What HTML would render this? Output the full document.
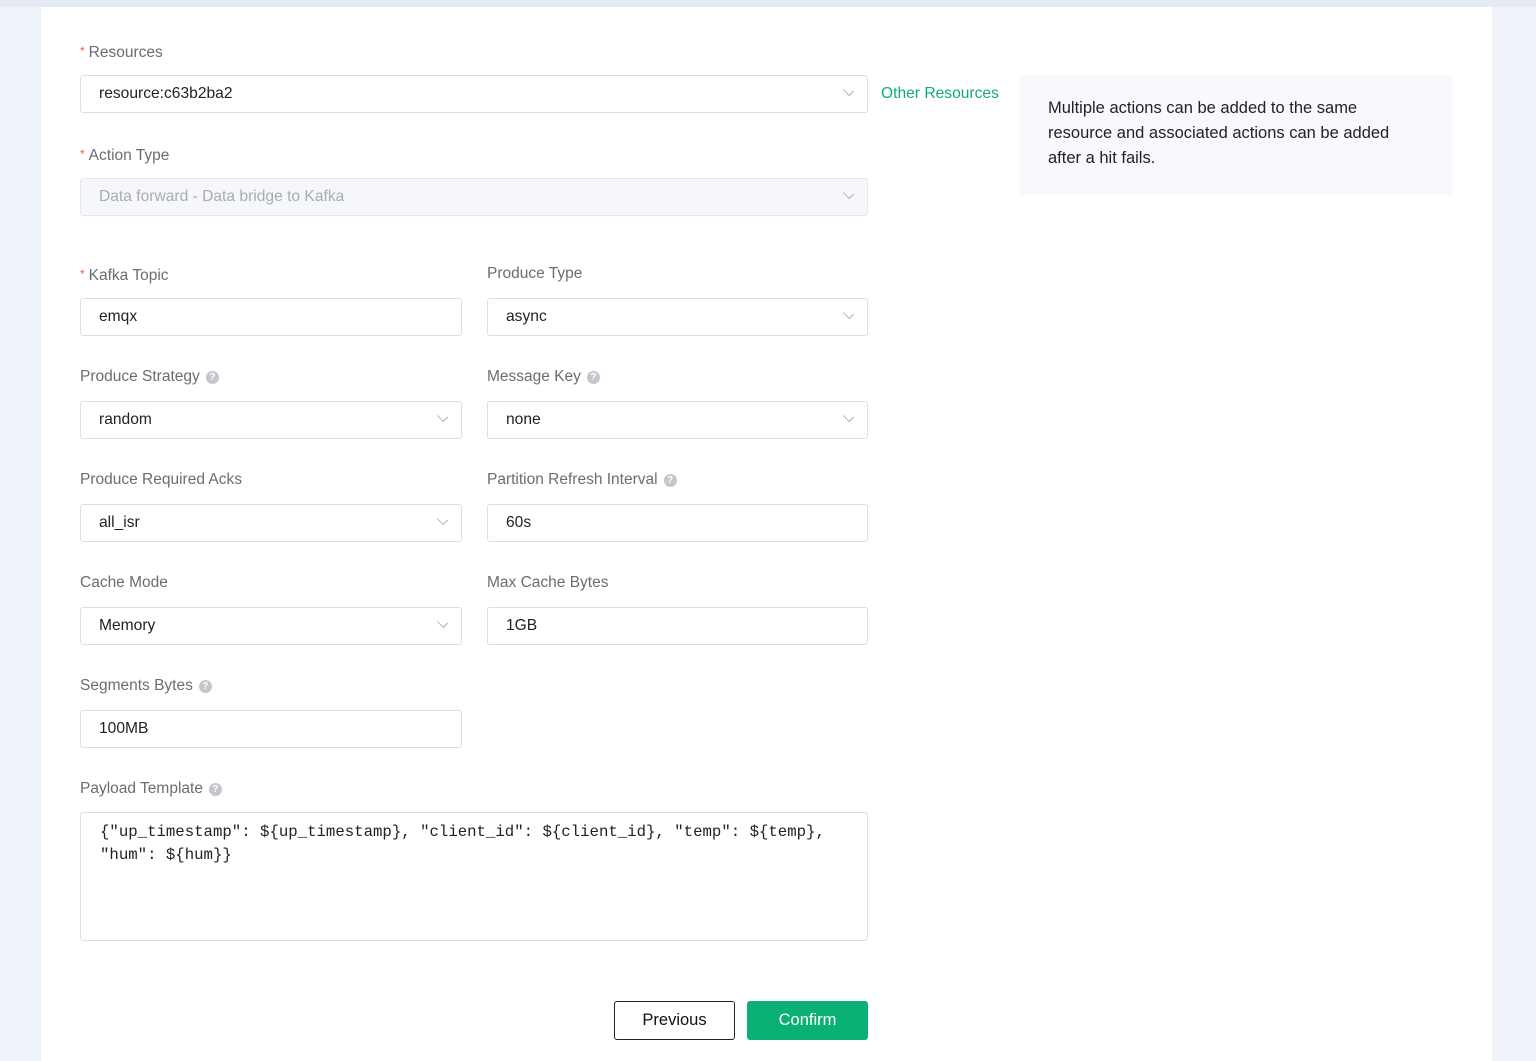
<!DOCTYPE html>
<html><head><meta charset="utf-8"><style>
*{box-sizing:border-box;margin:0;padding:0}
body{width:1536px;height:1061px;background:#eef2f9;font-family:"Liberation Sans",sans-serif;position:relative;overflow:hidden}
.panel{position:absolute;left:41px;top:7px;width:1451px;height:1054px;background:#fff}
.topbar{position:absolute;left:0;top:0;width:1536px;height:7px;background:#e6ebf3}
.lbl{position:absolute;font-size:15.5px;color:#6a6d73;line-height:18px}
.lbl .s{color:#e8633a;font-size:12px;vertical-align:2px;margin-right:4px}
.q{display:inline-block;width:13px;height:13px;border-radius:50%;background:#c3c6cc;color:#fff;font-size:10px;line-height:13px;text-align:center;font-weight:bold;margin-left:6px;vertical-align:1px}
.in{position:absolute;height:38px;border:1px solid #dcdfe6;border-radius:3px;background:#fff;font-size:15.6px;color:#222;line-height:36px;padding-left:18px}
.in.dis{background:#f5f7fa;color:#a8abb2;border-color:#e4e7ed}
.ar{position:absolute;right:14px;top:10px;width:9px;height:9px;border-right:1px solid #a8abb2;border-bottom:1px solid #a8abb2;transform:rotate(45deg) scale(1,.75)}
</style></head><body>
<div class="topbar"></div>
<div class="panel"></div>

<div class="lbl" style="left:80px;top:42px"><span class="s">*</span>Resources</div>
<div class="in" style="left:80px;top:75px;width:788px">resource:c63b2ba2<i class="ar"></i></div>
<div style="position:absolute;left:881px;top:85px;font-size:15.6px;color:#0fac72">Other Resources</div>
<div style="position:absolute;left:1020px;top:75px;width:432px;height:120px;background:#f7f9fc;padding:21px 28px;font-size:16.5px;line-height:25px;color:#222"><div style="width:362px">Multiple actions can be added to the same resource and associated actions can be added after a hit fails.</div></div>

<div class="lbl" style="left:80px;top:145px"><span class="s">*</span>Action Type</div>
<div class="in dis" style="left:80px;top:178px;width:788px">Data forward - Data bridge to Kafka<i class="ar"></i></div>

<div class="lbl" style="left:80px;top:265px"><span class="s">*</span>Kafka Topic</div>
<div class="in" style="left:80px;top:298px;width:382px">emqx</div>
<div class="lbl" style="left:487px;top:265px">Produce Type</div>
<div class="in" style="left:487px;top:298px;width:381px">async<i class="ar"></i></div>

<div class="lbl" style="left:80px;top:368px">Produce Strategy<span class="q">?</span></div>
<div class="in" style="left:80px;top:401px;width:382px">random<i class="ar"></i></div>
<div class="lbl" style="left:487px;top:368px">Message Key<span class="q">?</span></div>
<div class="in" style="left:487px;top:401px;width:381px">none<i class="ar"></i></div>

<div class="lbl" style="left:80px;top:471px">Produce Required Acks</div>
<div class="in" style="left:80px;top:504px;width:382px">all_isr<i class="ar"></i></div>
<div class="lbl" style="left:487px;top:471px">Partition Refresh Interval<span class="q">?</span></div>
<div class="in" style="left:487px;top:504px;width:381px">60s</div>

<div class="lbl" style="left:80px;top:574px">Cache Mode</div>
<div class="in" style="left:80px;top:607px;width:382px">Memory<i class="ar"></i></div>
<div class="lbl" style="left:487px;top:574px">Max Cache Bytes</div>
<div class="in" style="left:487px;top:607px;width:381px">1GB</div>

<div class="lbl" style="left:80px;top:677px">Segments Bytes<span class="q">?</span></div>
<div class="in" style="left:80px;top:710px;width:382px">100MB</div>

<div class="lbl" style="left:80px;top:780px">Payload Template<span class="q">?</span></div>
<div style="position:absolute;left:80px;top:812px;width:788px;height:129px;border:1px solid #dcdfe6;border-radius:3px;padding:8px 19px;font-family:'Liberation Mono',monospace;font-size:15.7px;line-height:23px;color:#222;white-space:pre">{"up_timestamp": ${up_timestamp}, "client_id": ${client_id}, "temp": ${temp},
"hum": ${hum}}</div>

<div style="position:absolute;left:614px;top:1001px;width:121px;height:39px;border:1px solid #222;border-radius:3px;font-size:16.5px;line-height:37px;text-align:center;color:#111">Previous</div>
<div style="position:absolute;left:747px;top:1001px;width:121px;height:39px;background:#0bb074;border-radius:3px;font-size:16.5px;line-height:39px;text-align:center;color:#fff">Confirm</div>
</body></html>
